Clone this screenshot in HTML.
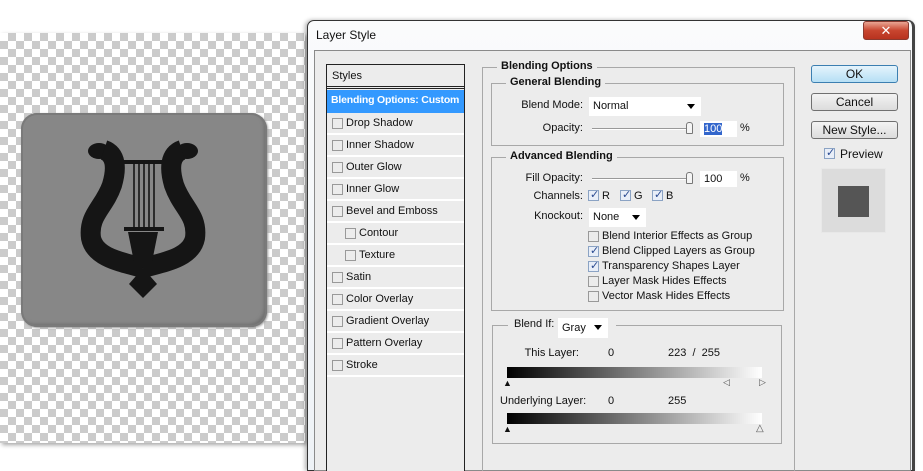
<!DOCTYPE html>
<html><head><style>
*{margin:0;padding:0;box-sizing:border-box}
html,body{width:923px;height:471px;overflow:hidden}
body{background:#fff;position:relative;font-family:"Liberation Sans","DejaVu Sans",sans-serif;font-size:11px;color:#111}
.a{position:absolute;white-space:nowrap}
.checker{left:0;top:33px;width:305px;height:410px;background-color:#fff;background-image:linear-gradient(45deg,#cbcbcb 25%,transparent 25%,transparent 75%,#cbcbcb 75%),linear-gradient(45deg,#cbcbcb 25%,transparent 25%,transparent 75%,#cbcbcb 75%);background-size:16px 16px;background-position:0 0,8px 8px;box-shadow:2px 2px 4px rgba(0,0,0,.35)}
.dlg{left:307px;top:20px;width:608px;height:451px;border:1px solid #333;border-right:3px solid #444;border-radius:7px 7px 0 0;background:linear-gradient(#fafbfc,#eef2f6);box-shadow:-2px 0 4px rgba(0,0,0,.3)}
.inner{left:314px;top:50px;width:597px;height:421px;background:#ececec;border:1px solid #8a8a8a}
.list{left:326px;top:64px;width:139px;height:407px;border:1px solid #222;border-bottom:none;background:#ececec;overflow:hidden}
.row{position:absolute;left:0;width:137px;height:22px;border-bottom:2px solid #fff;line-height:20px;padding-left:19px;white-space:nowrap}
.cb{position:absolute;width:11px;height:11px;border:1px solid #999;background:#ececec}
.row .cb{left:5px;top:5px}
.fs{position:absolute;border:1px solid #a8a8a8}
.lg{position:absolute;font-weight:bold;background:#ececec;padding:0 4px;white-space:nowrap}
.lbl{position:absolute;text-align:right;white-space:nowrap}
.dd{position:absolute;background:#fff;padding-left:4px;line-height:18px;white-space:nowrap}
.dd:after{content:"";position:absolute;right:6px;top:7px;border:4px solid transparent;border-top:5px solid #000}
.btn{position:absolute;left:811px;width:87px;height:18px;border:1px solid #707070;border-radius:3px;background:linear-gradient(#f3f3f3,#dcdcdc);text-align:center;line-height:16px;font-size:12px}
.ck{border-color:#8ba3c4;background:#e8eef8}
.ck:after{content:"✓";position:absolute;left:1px;top:-3px;font-size:11px;color:#2a4a90;font-weight:bold}
.grad{position:absolute;left:507px;width:255px;height:11px;background:linear-gradient(90deg,#000,#fff)}
</style></head><body>
<div class="a checker"></div>
<div class="a" style="left:21px;top:113px;width:246px;height:214px;border-radius:16px;background:#878787;box-shadow:inset 0 0 0 2px #7a7a7a,inset -3px -3px 3px #6f6f6f,1px 1px 2px #999"></div>
<svg class="a" style="left:0;top:0" width="300" height="350" viewBox="0 0 300 350">
<g fill="#151515" stroke="#151515">
<ellipse cx="99" cy="151" rx="11" ry="8" stroke="none"/>
<ellipse cx="187" cy="151" rx="11" ry="8" stroke="none"/>
<path d="M104,150 C116,154 117,168 112,185 C104,208 88,215 91,238 C95,258 122,262 143,268" fill="none" stroke-width="20"/>
<path d="M182,150 C170,154 169,168 174,185 C182,208 198,215 195,238 C191,258 164,262 143,268" fill="none" stroke-width="20"/>
<path d="M128,232 L158,232 L152,262 L134,262 Z" stroke="none"/>
<path d="M143,268 L157,284 L143,298 L129,284 Z" stroke="none"/>
<rect x="112" y="160" width="62" height="4" stroke="none"/>
<rect x="124" y="227" width="40" height="4" stroke="none"/>
<g stroke-width="1.6"><line x1="134" y1="163" x2="134" y2="228"/><line x1="139" y1="163" x2="139" y2="228"/><line x1="144" y1="163" x2="144" y2="228"/><line x1="149" y1="163" x2="149" y2="228"/><line x1="154" y1="163" x2="154" y2="228"/></g>
</g></svg>

<div class="a dlg"></div>
<div class="a" style="left:316px;top:28px;font-size:12px">Layer Style</div>
<div class="a" style="left:863px;top:21px;width:46px;height:19px;border:1px solid #8a3a30;border-radius:3px;background:linear-gradient(#e9a593,#c8452f 50%,#b8331f);color:#fff;text-align:center;font-weight:bold;font-size:13px;line-height:17px">✕</div>
<div class="a inner"></div>

<div class="a list">
<div class="row" style="top:0;height:24px;border-bottom:3px double #222;padding-left:5px;line-height:22px">Styles</div>
<div class="row" style="top:25px;height:23px;background:#3399ff;color:#fff;font-weight:bold;padding-left:4px;border:none;font-size:10.5px;letter-spacing:-0.2px">Blending Options: Custom</div>
<div class="row" style="top:48px"><span class="cb"></span>Drop Shadow</div>
<div class="row" style="top:70px"><span class="cb"></span>Inner Shadow</div>
<div class="row" style="top:92px"><span class="cb"></span>Outer Glow</div>
<div class="row" style="top:114px"><span class="cb"></span>Inner Glow</div>
<div class="row" style="top:136px"><span class="cb"></span>Bevel and Emboss</div>
<div class="row" style="top:158px;padding-left:32px"><span class="cb" style="left:18px"></span>Contour</div>
<div class="row" style="top:180px;padding-left:32px"><span class="cb" style="left:18px"></span>Texture</div>
<div class="row" style="top:202px"><span class="cb"></span>Satin</div>
<div class="row" style="top:224px"><span class="cb"></span>Color Overlay</div>
<div class="row" style="top:246px"><span class="cb"></span>Gradient Overlay</div>
<div class="row" style="top:268px"><span class="cb"></span>Pattern Overlay</div>
<div class="row" style="top:290px"><span class="cb"></span>Stroke</div>
</div>

<div class="fs" style="left:482px;top:67px;width:313px;height:420px"></div>
<div class="lg" style="left:497px;top:60px">Blending Options</div>
<div class="fs" style="left:491px;top:83px;width:293px;height:63px"></div>
<div class="lg" style="left:506px;top:76px">General Blending</div>
<div class="lbl" style="left:500px;width:83px;top:99px">Blend Mode:</div>
<div class="dd" style="left:589px;top:97px;width:112px;height:19px">Normal</div>
<div class="lbl" style="left:500px;width:83px;top:122px">Opacity:</div>
<div class="a" style="left:592px;top:128px;width:100px;height:2px;border-top:1px solid #999;border-bottom:1px solid #fff"></div>
<div class="a" style="left:686px;top:122px;width:7px;height:12px;border:1px solid #777;border-radius:3px 3px 1px 1px;background:#f4f4f4"></div>
<div class="a" style="left:700px;top:121px;width:37px;height:16px;background:#fff;padding:2px 4px"><span style="background:#3366cc;color:#fff">100</span></div>
<div class="a" style="left:740px;top:122px">%</div>

<div class="fs" style="left:491px;top:157px;width:293px;height:154px"></div>
<div class="lg" style="left:506px;top:150px">Advanced Blending</div>
<div class="lbl" style="left:500px;width:83px;top:172px">Fill Opacity:</div>
<div class="a" style="left:592px;top:178px;width:100px;height:2px;border-top:1px solid #999;border-bottom:1px solid #fff"></div>
<div class="a" style="left:686px;top:172px;width:7px;height:12px;border:1px solid #777;border-radius:3px 3px 1px 1px;background:#f4f4f4"></div>
<div class="a" style="left:700px;top:171px;width:37px;height:16px;background:#fff;padding:2px 4px">100</div>
<div class="a" style="left:740px;top:172px">%</div>
<div class="lbl" style="left:500px;width:83px;top:190px">Channels:</div>
<span class="a cb ck" style="left:588px;top:190px"></span><div class="a" style="left:602px;top:190px">R</div>
<span class="a cb ck" style="left:620px;top:190px"></span><div class="a" style="left:634px;top:190px">G</div>
<span class="a cb ck" style="left:652px;top:190px"></span><div class="a" style="left:666px;top:190px">B</div>
<div class="lbl" style="left:500px;width:83px;top:210px">Knockout:</div>
<div class="dd" style="left:589px;top:208px;width:57px;height:19px">None</div>
<span class="a cb" style="left:588px;top:231px"></span><div class="a" style="left:602px;top:230px">Blend Interior Effects as Group</div>
<span class="a cb ck" style="left:588px;top:246px"></span><div class="a" style="left:602px;top:245px">Blend Clipped Layers as Group</div>
<span class="a cb ck" style="left:588px;top:261px"></span><div class="a" style="left:602px;top:260px">Transparency Shapes Layer</div>
<span class="a cb" style="left:588px;top:276px"></span><div class="a" style="left:602px;top:275px">Layer Mask Hides Effects</div>
<span class="a cb" style="left:588px;top:291px"></span><div class="a" style="left:602px;top:290px">Vector Mask Hides Effects</div>

<div class="a" style="left:492px;top:325px;width:290px;height:119px;border:1px solid #a8a8a8"></div>
<div class="a" style="left:508px;top:318px;width:50px;height:14px;background:#ececec;padding-left:6px">Blend If:</div>
<div class="dd" style="left:558px;top:318px;width:50px;height:20px;line-height:20px">Gray</div>
<div class="a" style="left:608px;top:318px;width:8px;height:14px;background:#ececec"></div>
<div class="lbl" style="left:500px;width:79px;top:347px">This Layer:</div>
<div class="a" style="left:608px;top:347px">0</div>
<div class="a" style="left:668px;top:347px">223 &nbsp;/ &nbsp;255</div>
<div class="grad" style="top:367px"></div>
<div class="a" style="left:503px;top:378px;font-size:9px">▲</div>
<div class="a" style="left:723px;top:377px;font-size:9px;color:#555">◁</div>
<div class="a" style="left:759px;top:377px;font-size:9px;color:#555">▷</div>
<div class="lbl" style="left:500px;width:83px;top:395px">Underlying Layer:</div>
<div class="a" style="left:608px;top:395px">0</div>
<div class="a" style="left:668px;top:395px">255</div>
<div class="grad" style="top:413px"></div>
<div class="a" style="left:503px;top:424px;font-size:9px">▲</div>
<div class="a" style="left:756px;top:423px;font-size:10px;color:#555">△</div>

<div class="btn" style="top:65px;border-color:#3c7fb1;background:linear-gradient(#e5f4fc,#b6dff5)">OK</div>
<div class="btn" style="top:93px">Cancel</div>
<div class="btn" style="top:121px">New Style...</div>
<span class="a cb ck" style="left:824px;top:148px"></span><div class="a" style="left:840px;top:147px;font-size:12px">Preview</div>
<div class="a" style="left:821px;top:168px;width:65px;height:65px;background:#dcdcdc;border:1px solid #e8e8e8"></div>
<div class="a" style="left:838px;top:186px;width:31px;height:31px;background:#555"></div>
</body></html>
